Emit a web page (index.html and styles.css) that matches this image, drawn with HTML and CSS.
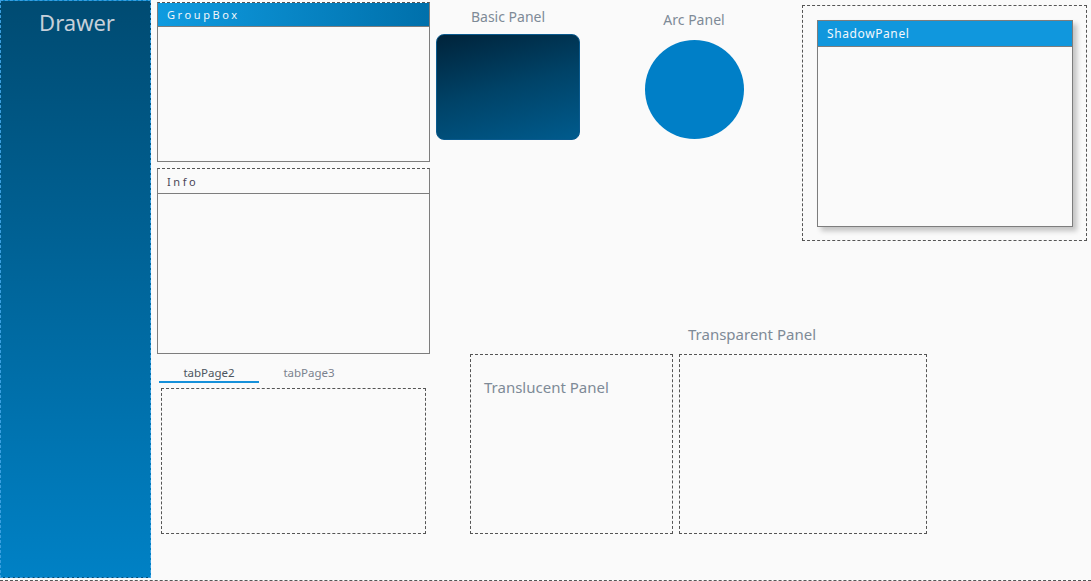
FILE: index.html
```html
<!DOCTYPE html>
<html>
<head>
<meta charset="utf-8">
<link rel="stylesheet" href="styles.css">
</head>
<body>
<div class="form">
  <aside class="drawer"><div class="drawer-title">Drawer</div></aside>
  <div class="col-a">
    <section class="groupbox"><div class="gb-head">GroupBox</div></section>
    <section class="infobox"><div class="info-head">Info</div></section>
    <div class="tabs">
      <div class="tab-strip">
        <span class="tab active">tabPage2</span>
        <span class="tab">tabPage3</span>
      </div>
      <div class="tab-page"></div>
    </div>
  </div>
  <div class="col-b">
    <div class="row-top">
      <div class="basic">
        <div class="label">Basic Panel</div>
        <div class="basic-panel"></div>
      </div>
      <div class="arc">
        <div class="label arc-label">Arc Panel</div>
        <div class="circle"></div>
      </div>
      <div class="shadow-wrap">
        <div class="shadow-panel"><div class="sp-head">ShadowPanel</div></div>
      </div>
    </div>
    <div class="row-bottom">
      <div class="translucent"><span class="tl-label">Translucent Panel</span></div>
      <div class="transparent-block">
        <div class="tp-label">Transparent Panel</div>
        <div class="transparent"></div>
      </div>
    </div>
  </div>
</div>
</body>
</html>
```
FILE: styles.css
```css
* { box-sizing: border-box; }
html, body { margin: 0; padding: 0; background: #fafafa; }
body { font-family: "Noto Sans", "Open Sans", sans-serif; overflow: hidden; }

.form {
  display: flex;
  align-items: flex-start;
  width: 1091px;
  height: 581px;
  border-bottom: 1px dashed #555;
}

.drawer {
  width: 151px;
  height: 578px;
  flex: none;
  border: 1px dashed #3a9fe0;
  background: linear-gradient(180deg, #004b72 0%, #0081c5 100%);
}
.drawer-title {
  text-align: center;
  color: #c6d0da;
  font-size: 22px;
  line-height: 26px;
  padding-top: 8px;
  padding-left: 3px;
}

.col-a { width: 273px; margin-left: 6px; margin-top: 2px; flex: none; }
.groupbox {
  height: 160px;
  border: 1px solid #7d7d7d;
  border-top: 1px dashed #555;
  background: #fafafa;
}
.gb-head {
  height: 24px;
  line-height: 23px;
  padding-left: 9px;
  font-size: 11px;
  letter-spacing: 2.6px;
  color: #f2f6fa;
  background: linear-gradient(90deg, #0f9be0 0%, #0070ab 100%);
  border-bottom: 1px solid #7d7d7d;
}
.infobox {
  margin-top: 6px;
  height: 186px;
  border: 1px solid #7d7d7d;
  border-top: 1px dashed #555;
}
.info-head {
  height: 25px;
  line-height: 25px;
  padding-left: 9px;
  font-size: 11px;
  letter-spacing: 2.6px;
  color: #4a4658;
  border-bottom: 1px solid #7d7d7d;
}
.tabs { margin-top: 11px; }
.tab-strip { display: flex; margin-left: 2px; }
.tab {
  width: 100px;
  height: 18px;
  line-height: 16px;
  text-align: center;
  font-size: 11.5px;
  color: #7a828e;
  border-bottom: 2px solid transparent;
}
.tab.active { color: #4c5560; border-bottom-color: #1590da; }
.tab-page {
  margin-top: 5px;
  margin-left: 4px;
  width: 265px;
  height: 146px;
  border: 1px dashed #555;
}

.col-b { margin-left: 6px; flex: none; }
.row-top { display: flex; align-items: flex-start; }
.label {
  text-align: center;
  font-size: 14px;
  line-height: 18px;
  color: #7e8a97;
}
.basic { width: 144px; }
.basic .label { margin-top: 8px; }
.basic-panel {
  margin-top: 8px;
  height: 106px;
  border-radius: 8px;
  border: 1px solid #0a5a8e;
  background: linear-gradient(165deg, #00233a 0%, #004368 50%, #005b8d 100%);
}
.arc { width: 98px; margin-left: 65px; }
.arc .label { margin-top: 11px; }
.circle {
  margin-top: 11px;
  width: 99px;
  height: 99px;
  border-radius: 50%;
  background: #007fc7;
}
.shadow-wrap {
  margin-left: 59px;
  margin-top: 5px;
  width: 285px;
  height: 236px;
  border: 1px dashed #555;
  padding: 14px 0 0 14px;
}
.shadow-panel {
  width: 256px;
  height: 207px;
  border: 1px solid #7d7d7d;
  background: #fafafa;
  box-shadow: 4px 4px 5px rgba(0,0,0,0.22);
}
.sp-head {
  height: 26px;
  line-height: 25px;
  padding-left: 9px;
  font-size: 12px;
  letter-spacing: 0.6px;
  color: #f4f8fc;
  background: #1097dd;
  border-bottom: 1px solid #7d7d7d;
}

.row-bottom { display: flex; align-items: flex-end; margin-top: 83px; }
.translucent {
  margin-left: 34px;
  width: 203px;
  height: 180px;
  border: 1px dashed #555;
  padding: 21px 0 0 13px;
}
.tl-label, .tp-label {
  font-size: 15px;
  line-height: 20px;
  color: #7e8a97;
}
.transparent-block { margin-left: 6px; width: 248px; }
.tp-label { padding-left: 9px; margin-bottom: 10px; }
.transparent { height: 180px; border: 1px dashed #555; }
```
